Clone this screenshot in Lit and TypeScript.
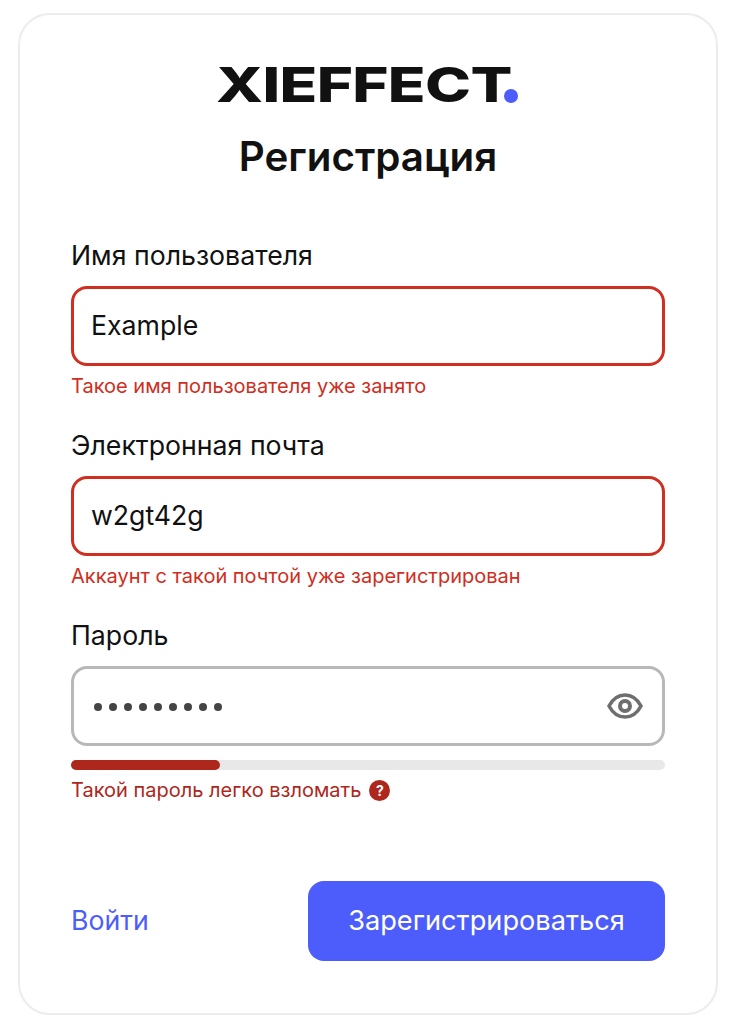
import { LitElement, html, css } from 'lit';
import { customElement } from 'lit/decorators.js';

type Field = { label: string; value: string; error: string };

@customElement('app-root')
export class AppRoot extends LitElement {
	fields: Field[] = [
		{ label: 'Имя пользователя', value: 'Example', error: 'Такое имя пользователя уже занято' },
		{ label: 'Электронная почта', value: 'w2gt42g', error: 'Аккаунт с такой почтой уже зарегистрирован' }
	];

	static styles = css`
		:host {
			display: block;
			height: 1032px;
			padding: 13px 18px 0;
			box-sizing: border-box;
			background: #fff;
			font-family: Inter, 'Noto Sans', sans-serif;
			color: #111;
		}
		.card {
			box-sizing: border-box;
			height: 1002px;
			border: 2px solid #ececec;
			border-radius: 32px;
			padding: 0 51px;
			display: flex;
			flex-direction: column;
		}
		.logo {
			margin: 48px auto 0;
			width: 300px;
			height: 44px;
			display: flex;
			justify-content: space-between;
			align-items: center;
		}
		.logo-text {
			display: inline-block;
			margin-left: -2px;
			font-size: 48px;
			line-height: 44px;
			font-weight: 800;
			transform: scaleX(1.29);
			transform-origin: left center;
			letter-spacing: -0.5px;
			color: #111;
		}
		.dot {
			width: 14px;
			height: 14px;
			border-radius: 50%;
			background: #4c5dfb;
			align-self: flex-end;
			margin-bottom: 4px;
		}
		h1 {
			margin: 26px 0 0;
			text-align: center;
			font-size: 40.3px;
			line-height: 48px;
			font-weight: 600;
		}
		.form {
			margin-top: 58px;
			display: flex;
			flex-direction: column;
			gap: 31px;
		}
		.field {
			display: flex;
			flex-direction: column;
		}
		.label {
			font-size: 26.7px;
			line-height: 32px;
			margin-bottom: 15px;
		}
		.input {
			box-sizing: border-box;
			height: 80px;
			border: 3px solid #b8b8b8;
			border-radius: 16px;
			padding: 0 17px;
			display: flex;
			align-items: center;
			justify-content: space-between;
			font-size: 26.7px;
		}
		.input.bad {
			border-color: #cf2e21;
			padding-bottom: 2px;
		}
		.err {
			margin-top: 8px;
			font-size: 20px;
			line-height: 24px;
			color: #cf2e21;
		}
		.dots {
			display: flex;
			gap: 6.6px;
			margin: 2px 0 0 3px;
		}
		.dots i {
			width: 8.4px;
			height: 8.4px;
			border-radius: 50%;
			background: #444;
		}
		.eye {
			display: block;
			margin-right: 2px;
		}
		.bar {
			margin-top: 14px;
			height: 10px;
			border-radius: 5px;
			background: #e8e8e8;
		}
		.bar div {
			height: 100%;
			width: 25%;
			border-radius: 5px;
			background: #ae271c;
		}
		.err.strong {
			margin-top: 8px;
			color: #ae271c;
			display: flex;
			align-items: center;
			gap: 8px;
		}
		.help {
			width: 21px;
			height: 21px;
			border-radius: 50%;
			background: #ae271c;
			color: #fff;
			font-size: 14px;
			line-height: 21px;
			font-weight: 700;
			text-align: center;
		}
		.actions {
			margin-top: 79px;
			display: flex;
			justify-content: space-between;
			align-items: center;
		}
		.login {
			font-size: 26.7px;
			color: #4c5dfb;
			margin-bottom: 2px;
		}
		.submit {
			width: 357px;
			height: 80px;
			border: 0;
			border-radius: 16px;
			padding: 0 0 2px;
			background: #4c5dfb;
			color: #fff;
			font: inherit;
			font-size: 27.2px;
		}
	`;

	render() {
		return html`<div class="card">
			<div class="logo">
				<span class="logo-text">XIEFFECT</span>
				<span class="dot"></span>
			</div>
			<h1>Регистрация</h1>
			<div class="form">
				${this.fields.map(
					(f) => html`<div class="field">
						<div class="label">${f.label}</div>
						<div class="input bad">${f.value}</div>
						<div class="err">${f.error}</div>
					</div>`
				)}
				<div class="field">
					<div class="label">Пароль</div>
					<div class="input">
						<div class="dots">${Array.from({ length: 9 }, () => html`<i></i>`)}</div>
						<svg class="eye" width="36" height="36" viewBox="0 0 36 36" fill="none" stroke="#6e6e6e" stroke-width="3.6">
							<path d="M2 18C6 10.500 11 7 18 7S30 10.500 34 18C30 25.500 25 29 18 29S6 25.500 2 18Z" stroke-linejoin="round" />
							<circle cx="18" cy="18" r="5" stroke-width="4" />
						</svg>
					</div>
					<div class="bar"><div></div></div>
					<div class="err strong">Такой пароль легко взломать <span class="help">?</span></div>
				</div>
			</div>
			<div class="actions">
				<span class="login">Войти</span>
				<button class="submit">Зарегистрироваться</button>
			</div>
		</div>`;
	}
}
